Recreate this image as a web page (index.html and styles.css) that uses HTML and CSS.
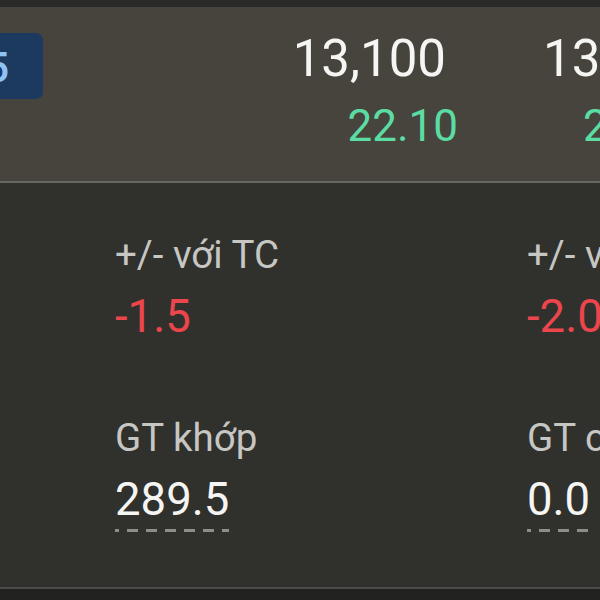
FILE: index.html
```html
<!DOCTYPE html>
<html lang="vi">
<head>
<meta charset="utf-8">
<link rel="stylesheet" href="styles.css">
</head>
<body>
<div class="topstrip"></div>
<div class="band">
  <div class="badge"><span>5</span></div>
  <div class="pcell">
    <div class="price">13,100</div>
    <div class="change">22.10</div>
  </div>
  <div class="pcell2">
    <div class="price">13,150</div>
    <div class="change change2">22.50</div>
  </div>
</div>
<div class="lower">
  <div class="col">
    <div class="label">+/- với TC</div>
    <div class="val neg">-1.5</div>
    <div class="label label2">GT khớp</div>
    <div class="val dashed">289.5</div>
  </div>
  <div class="col">
    <div class="label">+/- với TC</div>
    <div class="val neg">-2.0</div>
    <div class="label label2">GT chờ</div>
    <div class="val dashed">0.0</div>
  </div>
</div>
<div class="footer"></div>
</body>
</html>
```
FILE: styles.css
```css
html, body {
  margin: 0;
  padding: 0;
  background: #222220;
  font-family: Roboto, "Noto Sans", sans-serif;
  overflow: hidden;
  width: 600px;
  height: 600px;
}
.topstrip {
  height: 7px;
  background: #2a2a28;
}
.band {
  height: 174px;
  background: #46443c;
  display: flex;
  align-items: flex-start;
  overflow: hidden;
  border-bottom: 2px solid #68675f;
}
.badge {
  flex: none;
  margin-top: 26px;
  margin-left: -30px;
  width: 73px;
  height: 66px;
  background: #1c3a5f;
  border-radius: 7px;
  box-sizing: border-box;
  display: flex;
  justify-content: flex-end;
  padding-right: 34px;
  padding-top: 2px;
}
.badge span {
  font-size: 42px;
  line-height: 66px;
  font-weight: 500;
  color: #8fc3f6;
}
.pcell {
  flex: none;
  width: 415px;
  display: flex;
  flex-direction: column;
  align-items: flex-end;
  padding-top: 26px;
}
.pcell2 {
  flex: none;
  margin-left: 85px;
  display: flex;
  flex-direction: column;
  align-items: flex-start;
  padding-top: 26px;
  white-space: nowrap;
}
.price {
  font-size: 51px;
  line-height: 51px;
  color: #f5f5f3;
  margin-right: 12px;
}
.change {
  font-size: 44px;
  line-height: 44px;
  color: #5bdca3;
  margin-top: 20px;
}
.change2 {
  margin-left: 40px;
}
.lower {
  height: 406px;
  background: #30302d;
  display: grid;
  grid-template-columns: 412px 412px;
  padding-left: 115px;
  box-sizing: border-box;
  overflow: hidden;
  border-bottom: 2px solid #4b4b48;
}
.col {
  display: flex;
  flex-direction: column;
  align-items: flex-start;
  white-space: nowrap;
  padding-top: 52px;
}
.label {
  font-size: 38.5px;
  line-height: 39px;
  color: #c6c6c3;
}
.label2 {
  margin-top: 79px;
}
.val {
  font-size: 45.5px;
  line-height: 45px;
  color: #f5f5f3;
  margin-top: 20px;
}
.neg {
  color: #ea464c;
}
.dashed {
  padding-bottom: 10px;
  background: repeating-linear-gradient(90deg, #8d8d8a 0 4px, transparent 4px 12px, #8d8d8a 12px 19px) left bottom / 100% 3px no-repeat;
}
.footer {
  height: 9px;
  background: #222220;
}
```
